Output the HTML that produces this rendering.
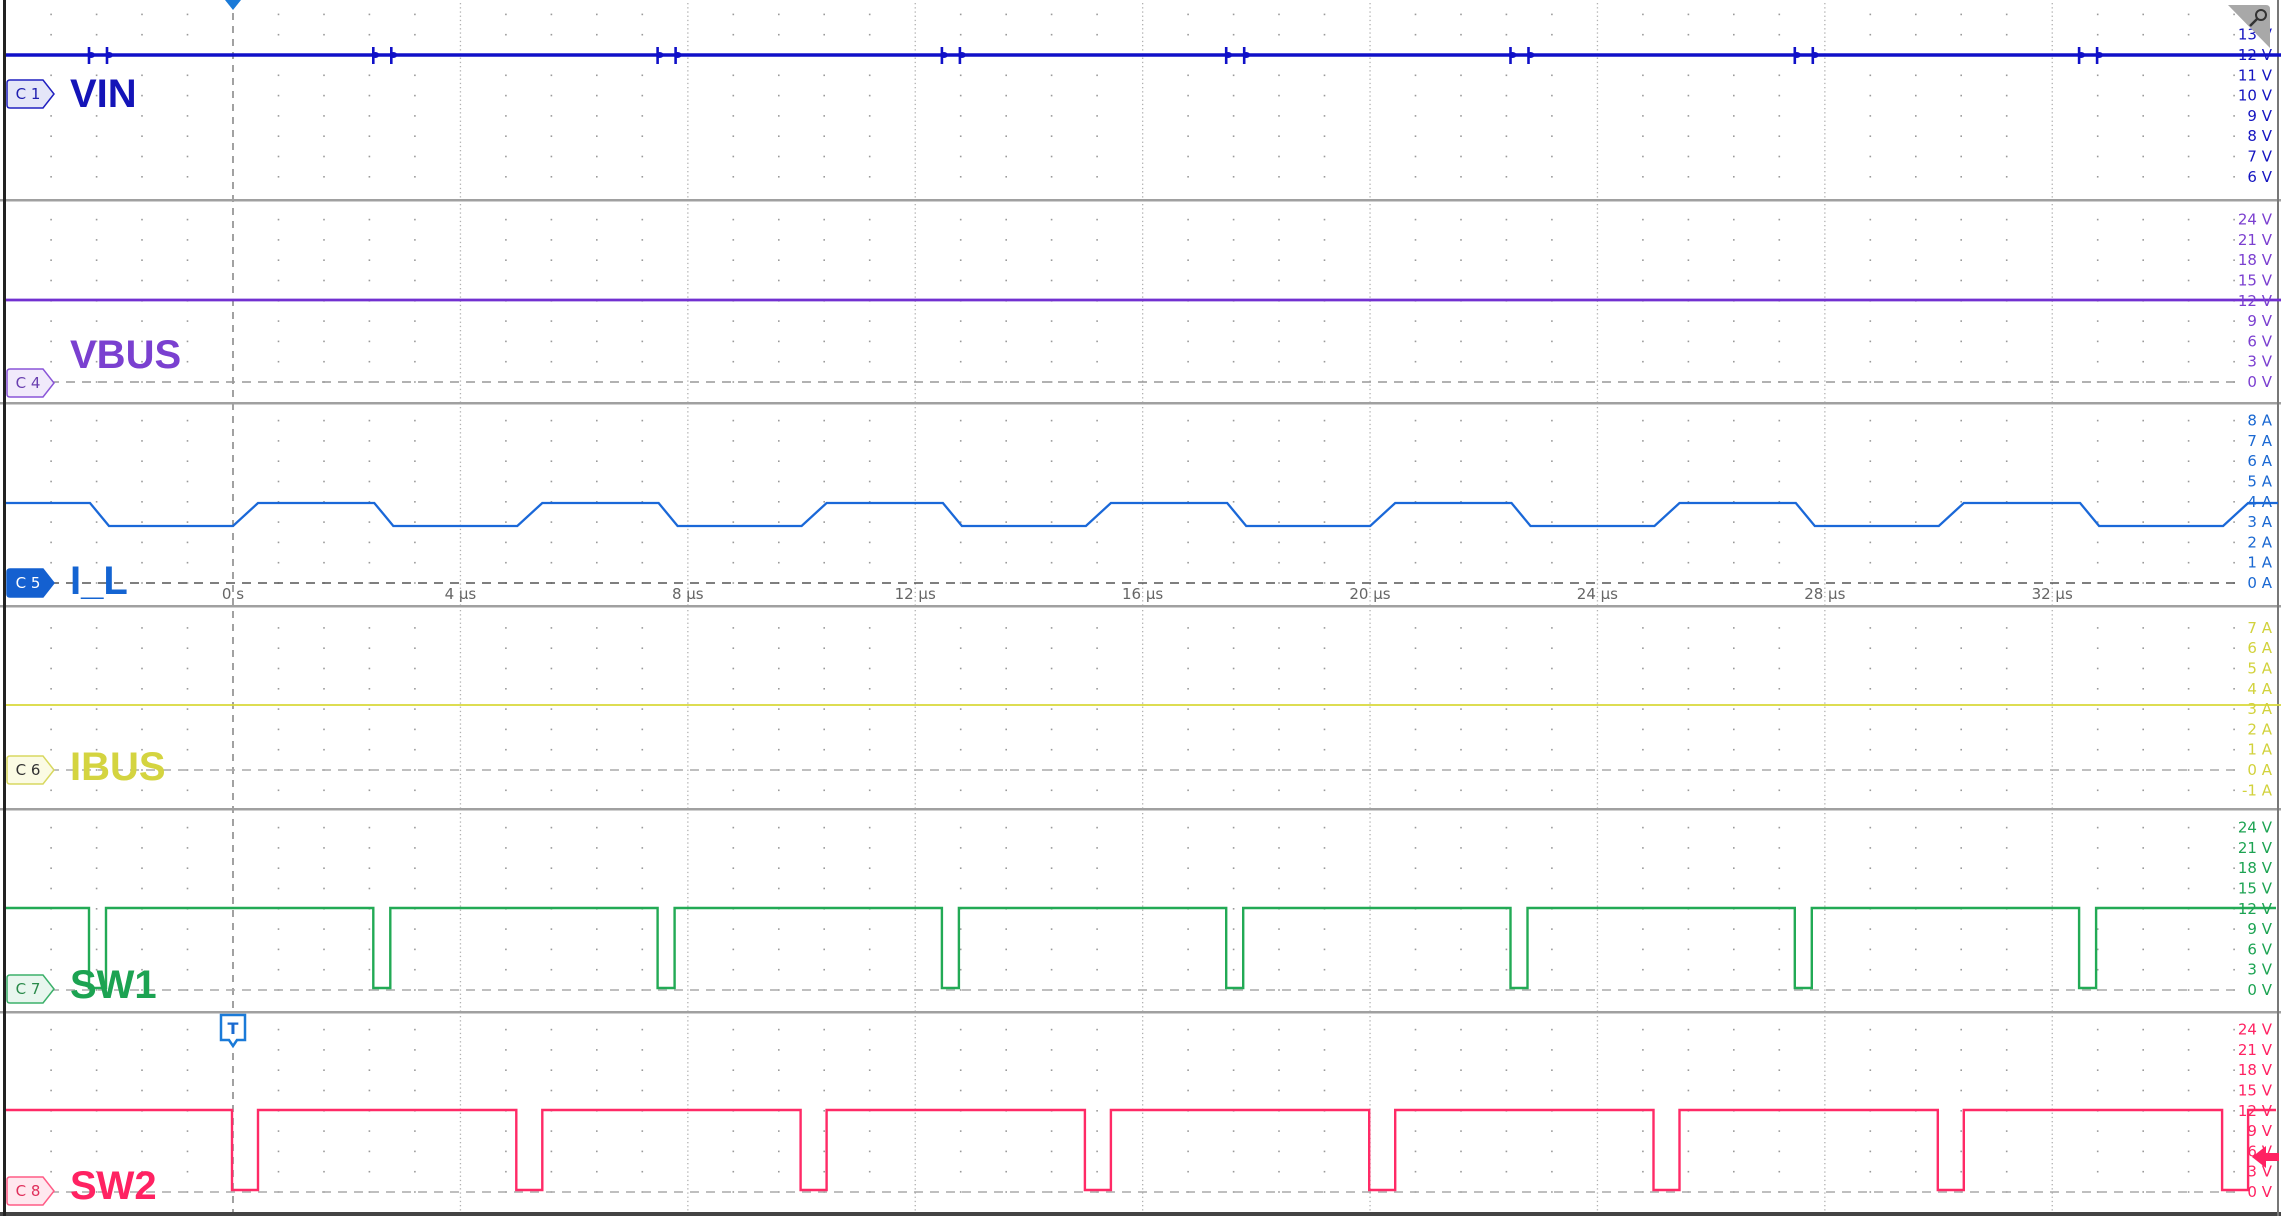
<!DOCTYPE html>
<html><head><meta charset="utf-8"><style>
html,body{margin:0;padding:0;background:#fff;}
body{width:2281px;height:1219px;overflow:hidden;position:relative;font-family:"Liberation Sans","DejaVu Sans",sans-serif;}
svg{position:absolute;left:0;top:0;}
</style></head><body>
<svg id="s" width="2281" height="1219" xmlns="http://www.w3.org/2000/svg" font-family="DejaVu Sans, Liberation Sans, sans-serif"></svg>
<script>
const s=document.getElementById('s');
let h='';
const T0=233, MAJ=227.4, MIN=MAJ/5, DY=20.3, PER=284.3;
const panels=[
 {top:0,bot:199,ref:55,lab:['13 V','12 V','11 V','10 V','9 V','8 V','7 V','6 V'],labRef:1,col:'#1414c0'},
 {top:201,bot:402,ref:382,lab:['24 V','21 V','18 V','15 V','12 V','9 V','6 V','3 V','0 V'],labRef:8,col:'#7b3fd0'},
 {top:404,bot:605,ref:583,lab:['8 A','7 A','6 A','5 A','4 A','3 A','2 A','1 A','0 A'],labRef:8,col:'#1a68d2'},
 {top:607,bot:808,ref:770,lab:['7 A','6 A','5 A','4 A','3 A','2 A','1 A','0 A','-1 A'],labRef:7,col:'#d2d23c'},
 {top:810,bot:1011,ref:990,lab:['24 V','21 V','18 V','15 V','12 V','9 V','6 V','3 V','0 V'],labRef:8,col:'#1ca352'},
 {top:1013,bot:1212,ref:1192,lab:['24 V','21 V','18 V','15 V','12 V','9 V','6 V','3 V','0 V'],labRef:8,col:'#ff2262'}
];
panels.forEach(p=>{
  for(let k=-10;k<60;k++){
    const x=T0+k*MIN; if(x<8||x>2275) continue;
    const major=(k%5===0);
    if(major && k!==0){
      for(let y=p.top+3;y<p.bot;y+=4.2) h+=`<rect x="${(x-0.6).toFixed(1)}" y="${y.toFixed(1)}" width="1.3" height="1.3" fill="#b0b0b0"/>`;
    } else if(!major){
      for(let j=-12;j<12;j++){const y=p.ref+j*DY; if(y>p.top+4&&y<p.bot-2) h+=`<rect x="${(x-0.8).toFixed(1)}" y="${(y-0.8).toFixed(1)}" width="1.6" height="1.6" fill="#9a9a9a"/>`;}
    }
  }
});
h+=`<line x1="${T0}" y1="0" x2="${T0}" y2="1212" stroke="#8a8a8a" stroke-width="1.6" stroke-dasharray="7,6"/>`;
[200,403,606,809,1012].forEach(y=>h+=`<rect x="0" y="${y-1}" width="2281" height="2.5" fill="#a0a0a0"/>`);
h+=`<rect x="0" y="1212" width="2281" height="4" fill="#444"/>`;
h+=`<rect x="2277" y="0" width="2" height="1216" fill="#777"/>`;
h+=`<rect x="3" y="0" width="3" height="1216" fill="#222"/>`;
[[382,'#999'],[583,'#555'],[770,'#aaa'],[990,'#aaa'],[1192,'#aaa']].forEach(([y,c])=>h+=`<line x1="50" y1="${y}" x2="2240" y2="${y}" stroke="${c}" stroke-width="1.6" stroke-dasharray="9,7"/>`);
function flat(y,col,w){return `<line x1="6" y1="${y}" x2="2281" y2="${y}" stroke="${col}" stroke-width="${w}"/>`;}
h+=flat(55,'#1010c8',3.4);
for(let k=-1;k<9;k++){[89,107].forEach(o=>{const xx=o+k*PER;if(xx>6&&xx<2275)h+=`<line x1="${xx}" y1="47" x2="${xx}" y2="64" stroke="#1010c8" stroke-width="2.6"/><ellipse cx="${xx+2}" cy="55" rx="4" ry="3" fill="#1010c8"/>`;});}
h+=flat(300,'#7230d0',2.8);
h+=flat(705,'#d8d83a',1.8);
{let d='M6 503';const hi=503,lo=526;
 for(let k=-1;k<9;k++){const b=T0+k*PER;
  d+=` L${b-143} ${hi} L${b-124} ${lo} L${b} ${lo} L${b+25} ${hi}`;}
 h+=`<clipPath id="c3"><rect x="6" y="404" width="2272" height="200"/></clipPath><path d="${d}" fill="none" stroke="#1a68d8" stroke-width="2.3" clip-path="url(#c3)"/>`;}
{let d='M6 908';for(let k=-1;k<9;k++){const a=89+k*PER;d+=` L${a} 908 L${a} 988 L${a+17} 988 L${a+17} 908`;}
 h+=`<clipPath id="c5"><rect x="6" y="810" width="2270" height="200"/></clipPath><path d="${d}" fill="none" stroke="#22aa55" stroke-width="2.4" clip-path="url(#c5)"/>`;}
{let d='M6 1110';for(let k=-1;k<9;k++){const a=232+k*PER;d+=` L${a} 1110 L${a} 1190 L${a+26} 1190 L${a+26} 1110`;}
 h+=`<clipPath id="c6"><rect x="6" y="1013" width="2270" height="198"/></clipPath><path d="${d}" fill="none" stroke="#ff2a66" stroke-width="2.4" clip-path="url(#c6)"/>`;}
panels.forEach(p=>{p.lab.forEach((t,i)=>{const y=p.ref-(p.labRef-i)*DY;if(y<p.top+6)return;
  h+=`<text x="2272" y="${(y+5).toFixed(1)}" font-size="15" fill="${p.col}" text-anchor="end">${t}</text>`;});});
['0 s','4 µs','8 µs','12 µs','16 µs','20 µs','24 µs','28 µs','32 µs'].forEach((t,i)=>h+=`<text x="${T0+i*MAJ}" y="599" font-size="15" fill="#666" text-anchor="middle">${t}</text>`);
function badge(y,txt,fill,stroke,tc){return `<path d="M10 ${y-14} L43 ${y-14} L54 ${y} L43 ${y+14} L10 ${y+14} Q7 ${y+14} 7 ${y+11} L7 ${y-11} Q7 ${y-14} 10 ${y-14} Z" fill="${fill}" stroke="${stroke}" stroke-width="1.5"/><text x="28" y="${y+5}" font-size="15" fill="${tc}" text-anchor="middle">${txt}</text>`;}
h+=badge(94,'C 1','#e4e6f8','#2020c0','#2020b0');
h+=badge(383,'C 4','#f1eafb','#8a55d8','#6a40b0');
h+=badge(583,'C 5','#1460d0','#1460d0','#fff');
h+=badge(770,'C 6','#fbfbe4','#d8d860','#333');
h+=badge(989,'C 7','#e8f6ee','#3cb06a','#2a8a4a');
h+=badge(1191,'C 8','#ffe8ef','#ff5c86','#e0305c');
function big(y,t,c){return `<text x="70" y="${y}" font-size="40" font-weight="bold" fill="${c}" font-family="Liberation Sans, sans-serif">${t}</text>`;}
h+=big(107,'VIN','#1414b8');h+=big(368,'VBUS','#7a40d0');h+=big(594,'I_L','#1464d2');
h+=big(780,'IBUS','#d4d440');h+=big(998,'SW1','#1ca352');h+=big(1199,'SW2','#ff2262');
h+=`<path d="M225 0 L241 0 L233 10 Z" fill="#1a7ad8"/>`;
h+=`<path d="M221 1015 L245 1015 L245 1040 L237 1040 L233 1046 L229 1040 L221 1040 Z" fill="#fff" stroke="#1a7ad8" stroke-width="2.5"/><text x="233" y="1034" font-size="16" font-weight="bold" fill="#1a6ad0" text-anchor="middle">T</text>`;
h+=`<path d="M2228 5 L2266 5 Q2270 5 2270 9 L2270 48 Z" fill="#a8a8a8"/><circle cx="2261" cy="15" r="5" fill="none" stroke="#333" stroke-width="2"/><line x1="2257" y1="19" x2="2250" y2="26" stroke="#333" stroke-width="2.5"/>`;
h+=`<path d="M2252 1157 L2266 1146 L2266 1153 L2279 1153 L2279 1161 L2266 1161 L2266 1168 Z" fill="#ff2262"/>`;
s.innerHTML=h;
</script>
</body></html>
